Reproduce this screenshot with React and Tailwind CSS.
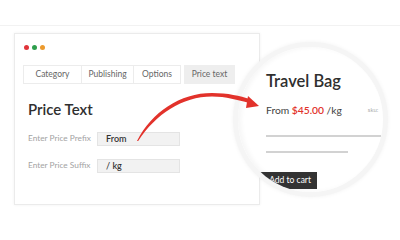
import React from "react";

const tabs = [
  { label: "Category", w: "w-[59px]" },
  { label: "Publishing", w: "w-[53px]" },
  { label: "Options", w: "w-[48px]" },
];

const App = () => {
  return (
    <div className="relative w-[400px] h-[240px] bg-white overflow-hidden font-['Lato','Noto_Sans',sans-serif]">
      {/* top rule */}
      <div className="h-[26px] border-b border-[#f2f2f2]" />

      {/* settings card */}
      <div className="ml-[14px] mt-[7px] w-[246px] h-[172px] border border-[#ebebeb] shadow-[0_0_3px_rgba(0,0,0,0.06)] pl-[8px] pt-[11px]">
        <div className="flex items-center gap-[3.5px] pl-[1px]">
          <span className="w-[4.5px] h-[4.5px] rounded-full bg-[#e0343a]" />
          <span className="w-[4.5px] h-[4.5px] rounded-full bg-[#2e9e4d]" />
          <span className="w-[4.5px] h-[4.5px] rounded-full bg-[#ec9a2d]" />
        </div>

        <div className="mt-[15px] flex items-stretch h-[19px] text-[8.5px] text-[#666]">
          {tabs.map((t) => (
            <div
              key={t.label}
              className={`${t.w} border border-[#ececec] -ml-px first:ml-0 flex items-center justify-center`}
            >
              {t.label}
            </div>
          ))}
          <div className="ml-[3px] w-[51px] bg-[#eeeeee] border border-[#eeeeee] flex items-center justify-center">
            Price text
          </div>
        </div>

        <div className="pl-[5px]">
          <h1 className="mt-[18px] text-[15px] leading-none font-semibold text-[#2f2f2f]">
            Price Text
          </h1>

          <div className="mt-[15px] flex items-center h-[14px]">
            <span className="w-[69px] text-[8.3px] text-[#a3a3a3]">Enter Price Prefix</span>
            <div className="w-[83px] h-[14px] bg-[#f2f2f2] border border-[#e4e4e4] pl-[8px] flex items-center text-[9px] font-semibold text-[#333]">
              From
            </div>
          </div>

          <div className="mt-[13px] flex items-center h-[14px]">
            <span className="w-[69px] text-[8.3px] text-[#a3a3a3]">Enter Price Suffix</span>
            <div className="w-[83px] h-[14px] bg-[#f2f2f2] border border-[#e4e4e4] pl-[8px] flex items-center text-[9px] font-semibold text-[#333]">
              / kg
            </div>
          </div>
        </div>
      </div>

      {/* magnified product preview */}
      <div className="absolute left-[233px] top-[42px] w-[155px] h-[155px] rounded-full bg-white border-[5px] border-[#f5f5f5] shadow-[0_0_4px_rgba(0,0,0,0.05),inset_3px_0_5px_rgba(0,0,0,0.04)] overflow-hidden">
        <div className="pl-[28px] pt-[26px]">
          <div className="text-[16.5px] leading-none font-semibold text-[#2f2f2f]">Travel Bag</div>
          <div className="mt-[15px] flex items-center text-[10.3px] leading-none text-[#444]">
            <span>From</span>
            <span className="ml-[2.5px] font-semibold text-[#e2322b]">$45.00</span>
            <span className="ml-[2.5px]">/kg</span>
            <span className="ml-[26px] text-[6px] text-[#aaa]">sku:</span>
          </div>
          <div className="mt-[20px] w-[115px] h-[2px] bg-[#d2d2d2]" />
          <div className="mt-[14px] w-[82px] h-[2px] bg-[#d2d2d2]" />
          <div className="mt-[19px] -ml-[12px] w-[63px] h-[17px] bg-[#333] text-white text-[8.5px] flex items-center justify-end pr-[6px]">
            Add to cart
          </div>
        </div>
      </div>

      {/* arrow */}
      <svg className="absolute left-0 top-0 pointer-events-none" width="400" height="240" viewBox="0 0 400 240">
        <path
          d="M137 141 C152 112 180 93 212 93 C228 93 240 96 250 99 L249 103 C238 100 226 96.5 212 96.5 C182 96.5 156 114 138.2 141 Z"
          fill="#e2322b"
        />
        <path d="M248 96 L259 106 L246 108 Z" fill="#e2322b" />
      </svg>
    </div>
  );
};

export default App;
